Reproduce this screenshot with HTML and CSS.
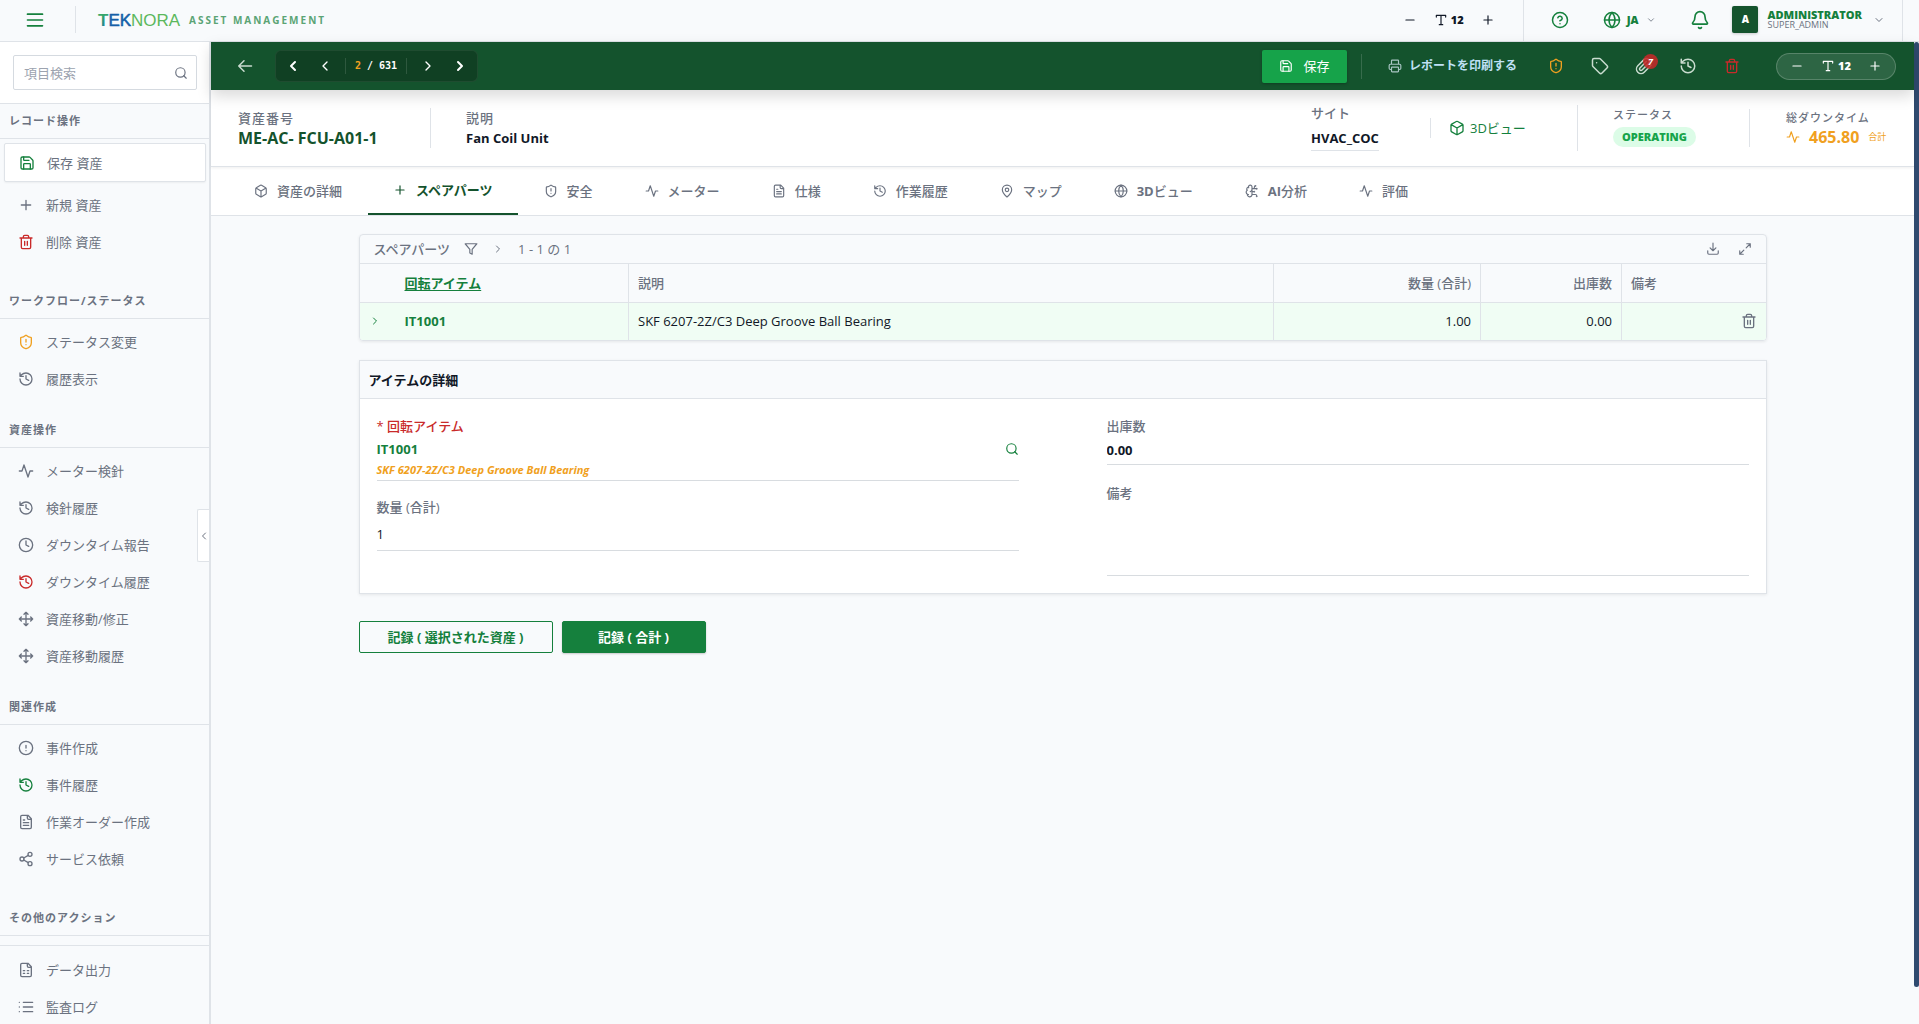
FILE: index.html
```html
<!DOCTYPE html>
<html lang="ja">
<head>
<meta charset="utf-8">
<meta name="viewport" content="width=device-width, initial-scale=1">
<title>TEKNORA Asset Management</title>
<link rel="stylesheet" href="styles.css">
</head>
<body>
<svg class="sprite" aria-hidden="true">
  <symbol id="menu" viewBox="0 0 24 24"><path d="M3 5h18M3 12h18M3 19h18"/></symbol>
  <symbol id="search" viewBox="0 0 24 24"><circle cx="11" cy="11" r="8"/><path d="m21 21-4.3-4.3"/></symbol>
  <symbol id="save" viewBox="0 0 24 24"><path d="M15.2 3a2 2 0 0 1 1.4.6l3.8 3.8a2 2 0 0 1 .6 1.4V19a2 2 0 0 1-2 2H5a2 2 0 0 1-2-2V5a2 2 0 0 1 2-2z"/><path d="M17 21v-7a1 1 0 0 0-1-1H8a1 1 0 0 0-1 1v7M7 3v4a1 1 0 0 0 1 1h7"/></symbol>
  <symbol id="plus" viewBox="0 0 24 24"><path d="M5 12h14M12 5v14"/></symbol>
  <symbol id="minus" viewBox="0 0 24 24"><path d="M5 12h14"/></symbol>
  <symbol id="type" viewBox="0 0 24 24"><path d="M4 7V4h16v3M9 20h6M12 4v16"/></symbol>
  <symbol id="trash" viewBox="0 0 24 24"><path d="M3 6h18M19 6v14a2 2 0 0 1-2 2H7a2 2 0 0 1-2-2V6M8 6V4a2 2 0 0 1 2-2h4a2 2 0 0 1 2 2v2M10 11v6M14 11v6"/></symbol>
  <symbol id="shield" viewBox="0 0 24 24"><path d="M20 13c0 5-3.5 7.5-7.66 8.95a1 1 0 0 1-.67-.01C7.5 20.5 4 18 4 13V6a1 1 0 0 1 1-1c2 0 4.5-1.2 6.24-2.72a1.17 1.17 0 0 1 1.52 0C14.51 3.81 17 5 19 5a1 1 0 0 1 1 1zM12 8v4M12 16h.01"/></symbol>
  <symbol id="history" viewBox="0 0 24 24"><path d="M3 12a9 9 0 1 0 9-9 9.75 9.75 0 0 0-6.74 2.74L3 8M3 3v5h5M12 7v5l4 2"/></symbol>
  <symbol id="activity" viewBox="0 0 24 24"><path d="M22 12h-4l-3 9L9 3l-3 9H2"/></symbol>
  <symbol id="clock" viewBox="0 0 24 24"><circle cx="12" cy="12" r="10"/><path d="M12 6v6l4 2"/></symbol>
  <symbol id="move" viewBox="0 0 24 24"><path d="M5 9l-3 3 3 3M9 5l3-3 3 3M15 19l-3 3-3-3M19 9l3 3-3 3M2 12h20M12 2v20"/></symbol>
  <symbol id="alert" viewBox="0 0 24 24"><circle cx="12" cy="12" r="10"/><path d="M12 8v4M12 16h.01"/></symbol>
  <symbol id="file" viewBox="0 0 24 24"><path d="M15 2H6a2 2 0 0 0-2 2v16a2 2 0 0 0 2 2h12a2 2 0 0 0 2-2V7zM14 2v4a2 2 0 0 0 2 2h4M10 9H8M16 13H8M16 17H8"/></symbol>
  <symbol id="sheet" viewBox="0 0 24 24"><path d="M15 2H6a2 2 0 0 0-2 2v16a2 2 0 0 0 2 2h12a2 2 0 0 0 2-2V7zM14 2v4a2 2 0 0 0 2 2h4M8 13h2M14 13h2M8 17h2M14 17h2"/></symbol>
  <symbol id="share" viewBox="0 0 24 24"><circle cx="18" cy="5" r="3"/><circle cx="6" cy="12" r="3"/><circle cx="18" cy="19" r="3"/><path d="m8.59 13.51 6.83 3.98M15.41 6.51l-6.82 3.98"/></symbol>
  <symbol id="list" viewBox="0 0 24 24"><path d="M8 5h14M8 12h14M8 19h14M2 5h.01M2 12h.01M2 19h.01"/></symbol>
  <symbol id="left" viewBox="0 0 24 24"><path d="m15 18-6-6 6-6"/></symbol>
  <symbol id="right" viewBox="0 0 24 24"><path d="m9 18 6-6-6-6"/></symbol>
  <symbol id="down" viewBox="0 0 24 24"><path d="m6 9 6 6 6-6"/></symbol>
  <symbol id="back" viewBox="0 0 24 24"><path d="m12 19-7-7 7-7M22 12H5"/></symbol>
  <symbol id="help" viewBox="0 0 24 24"><circle cx="12" cy="12" r="10"/><path d="M9.09 9a3 3 0 0 1 5.83 1c0 2-3 3-3 3M12 17h.01"/></symbol>
  <symbol id="globe" viewBox="0 0 24 24"><circle cx="12" cy="12" r="10"/><path d="M12 2a14.5 14.5 0 0 0 0 20 14.5 14.5 0 0 0 0-20M2 12h20"/></symbol>
  <symbol id="bell" viewBox="0 0 24 24"><path d="M10.27 21a2 2 0 0 0 3.46 0M3.26 15.33A1 1 0 0 0 4 17h16a1 1 0 0 0 .74-1.67C19.41 13.96 18 12.5 18 8A6 6 0 0 0 6 8c0 4.5-1.41 5.96-2.74 7.33"/></symbol>
  <symbol id="printer" viewBox="0 0 24 24"><path d="M6 18H4a2 2 0 0 1-2-2v-5a2 2 0 0 1 2-2h16a2 2 0 0 1 2 2v5a2 2 0 0 1-2 2h-2M6 9V3a1 1 0 0 1 1-1h10a1 1 0 0 1 1 1v6"/><rect x="6" y="14" width="12" height="8" rx="1"/></symbol>
  <symbol id="tag" viewBox="0 0 24 24"><path d="M12.59 2.59A2 2 0 0 0 11.17 2H4a2 2 0 0 0-2 2v7.17a2 2 0 0 0 .59 1.42l8.7 8.7a2.43 2.43 0 0 0 3.42 0l6.58-6.58a2.43 2.43 0 0 0 0-3.42zM7.5 7.5h.01"/></symbol>
  <symbol id="clip" viewBox="0 0 24 24"><path d="m21.44 11.05-9.19 9.19a6 6 0 0 1-8.49-8.49l8.57-8.57A4 4 0 1 1 18 8.84l-8.59 8.57a2 2 0 0 1-2.83-2.83l8.49-8.48"/></symbol>
  <symbol id="box" viewBox="0 0 24 24"><path d="M21 8a2 2 0 0 0-1-1.73l-7-4a2 2 0 0 0-2 0l-7 4A2 2 0 0 0 3 8v8a2 2 0 0 0 1 1.73l7 4a2 2 0 0 0 2 0l7-4A2 2 0 0 0 21 16ZM3.3 7l8.7 5 8.7-5M12 22V12"/></symbol>
  <symbol id="pin" viewBox="0 0 24 24"><path d="M20 10c0 4.99-5.54 10.19-7.4 11.8a1 1 0 0 1-1.2 0C9.54 20.19 4 14.99 4 10a8 8 0 0 1 16 0"/><circle cx="12" cy="10" r="3"/></symbol>
  <symbol id="brain" viewBox="0 0 24 24"><path d="M12 5a3 3 0 1 0-5.997.125 4 4 0 0 0-2.526 5.77 4 4 0 0 0 .556 6.588A4 4 0 1 0 12 18ZM9 13a4.5 4.5 0 0 0 3-4M6 5.13A3 3 0 0 0 6.4 6.5M3.48 10.9a4 4 0 0 1 .58-.4M6 18a4 4 0 0 1-1.97-.52M12 13h4M12 18h6a2 2 0 0 1 2 2v1M12 8h8M16 8V5a2 2 0 0 1 2-2"/><circle cx="16" cy="13" r=".5"/><circle cx="18" cy="3" r=".5"/><circle cx="20" cy="21" r=".5"/><circle cx="20" cy="8" r=".5"/></symbol>
  <symbol id="filter" viewBox="0 0 24 24"><path d="M22 3H2l8 9.46V19l4 2v-8.54z"/></symbol>
  <symbol id="download" viewBox="0 0 24 24"><path d="M21 15v4a2 2 0 0 1-2 2H5a2 2 0 0 1-2-2v-4M7 10l5 5 5-5M12 15V2"/></symbol>
  <symbol id="expand" viewBox="0 0 24 24"><path d="M15 3h6v6M21 3l-7 7M3 21l7-7M9 21H3v-6"/></symbol>
</svg>

<header class="topbar">
  <button class="icon-btn menu-btn" aria-label="メニュー"><svg class="i20"><use href="#menu"/></svg></button>
  <div class="brand">
    <svg class="logo" viewBox="0 0 84 24" role="img" aria-label="TEKNORA">
      <defs><linearGradient id="tfill" x1="0" y1="0" x2="1" y2="1"><stop offset="0" stop-color="#3fb45a"/><stop offset=".5" stop-color="#1f7f9f"/><stop offset="1" stop-color="#1560a8"/></linearGradient></defs>
      <text x="1" y="18"><tspan class="logo-t">T</tspan><tspan class="logo-blue">EK</tspan><tspan class="logo-green">NORA</tspan></text>
    </svg>
    <span class="brand-sub">ASSET MANAGEMENT</span>
  </div>
  <div class="top-zoom">
    <button class="icon-btn" aria-label="縮小"><svg class="i14"><use href="#minus"/></svg></button>
    <span class="zoom-value"><svg class="i14"><use href="#type"/></svg>12</span>
    <button class="icon-btn" aria-label="拡大"><svg class="i14"><use href="#plus"/></svg></button>
  </div>
  <div class="top-user">
    <button class="icon-btn" aria-label="ヘルプ"><svg class="i18"><use href="#help"/></svg></button>
    <button class="lang"><svg class="i18"><use href="#globe"/></svg><b>JA</b><svg class="i10"><use href="#down"/></svg></button>
    <button class="icon-btn" aria-label="通知"><svg class="i20"><use href="#bell"/></svg></button>
    <button class="user">
      <span class="avatar">A</span>
      <span class="user-text"><b>ADMINISTRATOR</b><span>SUPER_ADMIN</span></span>
      <svg class="i12"><use href="#down"/></svg>
    </button>
  </div>
</header>

<div class="shell">
  <aside class="sidebar">
    <div class="search">
      <input type="text" aria-label="項目検索" placeholder="項目検索">
      <svg class="i14"><use href="#search"/></svg>
    </div>
    <section class="group divided">
      <h2>レコード操作</h2>
      <a href="#" class="item current"><svg><use href="#save"/></svg>保存 資産</a>
      <a href="#" class="item"><svg><use href="#plus"/></svg>新規 資産</a>
      <a href="#" class="item red"><svg><use href="#trash"/></svg>削除 資産</a>
    </section>
    <section class="group">
      <h2>ワークフロー/ステータス</h2>
      <a href="#" class="item amber"><svg><use href="#shield"/></svg>ステータス変更</a>
      <a href="#" class="item"><svg><use href="#history"/></svg>履歴表示</a>
    </section>
    <section class="group">
      <h2>資産操作</h2>
      <a href="#" class="item"><svg><use href="#activity"/></svg>メーター検針</a>
      <a href="#" class="item"><svg><use href="#history"/></svg>検針履歴</a>
      <a href="#" class="item"><svg><use href="#clock"/></svg>ダウンタイム報告</a>
      <a href="#" class="item red"><svg><use href="#history"/></svg>ダウンタイム履歴</a>
      <a href="#" class="item"><svg><use href="#move"/></svg>資産移動/修正</a>
      <a href="#" class="item"><svg><use href="#move"/></svg>資産移動履歴</a>
    </section>
    <section class="group divided">
      <h2>関連作成</h2>
      <a href="#" class="item"><svg><use href="#alert"/></svg>事件作成</a>
      <a href="#" class="item green"><svg><use href="#history"/></svg>事件履歴</a>
      <a href="#" class="item"><svg><use href="#file"/></svg>作業オーダー作成</a>
      <a href="#" class="item"><svg><use href="#share"/></svg>サービス依頼</a>
    </section>
    <section class="group">
      <h2>その他のアクション</h2>
      <hr>
      <a href="#" class="item"><svg><use href="#sheet"/></svg>データ出力</a>
      <a href="#" class="item"><svg><use href="#list"/></svg>監査ログ</a>
    </section>
    <button class="collapse" aria-label="サイドバーを閉じる"><svg class="i12"><use href="#left"/></svg></button>
  </aside>

  <main class="main">
    <div class="toolbar">
      <button class="icon-btn back" aria-label="戻る"><svg class="i18"><use href="#back"/></svg></button>
      <div class="pager">
        <button class="strong" aria-label="最初"><svg class="i16"><use href="#left"/></svg></button>
        <button aria-label="前へ"><svg class="i16"><use href="#left"/></svg></button>
        <span class="count"><em>2</em> / 631</span>
        <button aria-label="次へ"><svg class="i16"><use href="#right"/></svg></button>
        <button class="strong" aria-label="最後"><svg class="i16"><use href="#right"/></svg></button>
      </div>
      <button class="save"><svg class="i14"><use href="#save"/></svg>保存</button>
      <button class="print"><svg class="i14"><use href="#printer"/></svg>レポートを印刷する</button>
      <div class="tools">
        <button class="amber" aria-label="ステータス変更"><svg class="i16"><use href="#shield"/></svg></button>
        <button aria-label="タグ"><svg class="i18"><use href="#tag"/></svg></button>
        <button class="attach" aria-label="添付"><svg class="i18"><use href="#clip"/></svg><span class="badge">7</span></button>
        <button aria-label="履歴"><svg class="i18"><use href="#history"/></svg></button>
        <button class="red" aria-label="削除"><svg class="i16"><use href="#trash"/></svg></button>
      </div>
      <div class="pill">
        <button class="icon-btn" aria-label="縮小"><svg class="i14"><use href="#minus"/></svg></button>
        <span class="zoom-value"><svg class="i14"><use href="#type"/></svg>12</span>
        <button class="icon-btn" aria-label="拡大"><svg class="i14"><use href="#plus"/></svg></button>
      </div>
    </div>

    <div class="summary">
      <div class="fact asset"><span class="cap">資産番号</span><b>ME-AC- FCU-A01-1</b></div>
      <div class="fact desc"><span class="cap">説明</span><b>Fan Coil Unit</b></div>
      <div class="fact site"><span class="cap tight">サイト</span><b>HVAC_COC</b></div>
      <a href="#" class="view3d"><svg class="i16"><use href="#box"/></svg>3Dビュー</a>
      <div class="fact status"><span class="cap small">ステータス</span><b>OPERATING</b></div>
      <div class="fact downtime"><span class="cap small">総ダウンタイム</span><span class="total"><svg class="i14"><use href="#activity"/></svg><b>465.80</b><small>合計</small></span></div>
    </div>

    <nav class="tabs">
      <a href="#"><svg class="i14"><use href="#box"/></svg>資産の詳細</a>
      <a href="#" class="active" aria-current="page"><svg class="i14"><use href="#plus"/></svg>スペアパーツ</a>
      <a href="#"><svg class="i14"><use href="#shield"/></svg>安全</a>
      <a href="#"><svg class="i14"><use href="#activity"/></svg>メーター</a>
      <a href="#"><svg class="i14"><use href="#file"/></svg>仕様</a>
      <a href="#"><svg class="i14"><use href="#history"/></svg>作業履歴</a>
      <a href="#"><svg class="i14"><use href="#pin"/></svg>マップ</a>
      <a href="#"><svg class="i14"><use href="#globe"/></svg><span><b>3D</b>ビュー</span></a>
      <a href="#"><svg class="i14"><use href="#brain"/></svg><span><b>AI</b>分析</span></a>
      <a href="#"><svg class="i14"><use href="#activity"/></svg>評価</a>
    </nav>

    <div class="content">
      <section class="card parts">
        <div class="parts-bar">
          <h3>スペアパーツ</h3>
          <button class="icon-btn" aria-label="フィルター"><svg class="i14"><use href="#filter"/></svg></button>
          <button class="icon-btn" aria-label="展開"><svg class="i12"><use href="#right"/></svg></button>
          <span class="range">1 - 1 の 1</span>
          <button class="icon-btn push" aria-label="ダウンロード"><svg class="i14"><use href="#download"/></svg></button>
          <button class="icon-btn" aria-label="全画面"><svg class="i14"><use href="#expand"/></svg></button>
        </div>
        <table>
          <colgroup><col class="c-open"><col class="c-item"><col><col class="c-qty"><col class="c-out"><col class="c-note"></colgroup>
          <thead>
            <tr><th></th><th class="sorted"><a href="#">回転アイテム</a></th><th>説明</th><th class="num">数量 (合計)</th><th class="num">出庫数</th><th>備考</th></tr>
          </thead>
          <tbody>
            <tr><td><button class="icon-btn open" aria-label="開く"><svg class="i12"><use href="#right"/></svg></button></td><td class="code">IT1001</td><td>SKF 6207-2Z/C3 Deep Groove Ball Bearing</td><td class="num">1.00</td><td class="num">0.00</td><td class="num"><button class="icon-btn del" aria-label="行を削除"><svg class="i16"><use href="#trash"/></svg></button></td></tr>
          </tbody>
        </table>
      </section>

      <section class="card detail">
        <h3>アイテムの詳細</h3>
        <form class="fields">
          <div class="col">
            <div class="field item-field">
              <label for="item" class="required">* 回転アイテム</label>
              <div class="lookup"><input id="item" type="text" value="IT1001"><button type="button" class="icon-btn" aria-label="検索"><svg class="i14"><use href="#search"/></svg></button></div>
              <span class="hint">SKF 6207-2Z/C3 Deep Groove Ball Bearing</span>
            </div>
            <div class="field"><label for="qty">数量 (合計)</label><input id="qty" class="qty" type="text" value="1"></div>
          </div>
          <div class="col">
            <div class="field"><label for="out">出庫数</label><input id="out" class="out" type="text" value="0.00"></div>
            <div class="field"><label for="note">備考</label><textarea id="note"></textarea></div>
          </div>
        </form>
      </section>

      <div class="actions">
        <button class="outline">記録 ( 選択された資産 )</button>
        <button class="solid">記録 ( 合計 )</button>
      </div>
    </div>
  </main>
  <div class="scroll" aria-hidden="true"><div class="thumb"></div></div>
</div>
</body>
</html>
```
FILE: styles.css
```css
:root {
  --line: #dfe3e8;
  --bg: #f8fafc;
  --gray: #6b7280;
  --ink: #111827;
  --green: #15803d;
  --deep: #14532d;
  --amber: #f0a020;
  --red: #c92a2a;
}
* { box-sizing: border-box; }
body {
  margin: 0;
  height: 100vh;
  display: flex;
  flex-direction: column;
  overflow: hidden;
  background: var(--bg);
  color: var(--ink);
  font: 13px/20px "Open Sans", "Noto Sans CJK JP", sans-serif;
}
button, input, textarea { font: inherit; color: inherit; }
button { border: 0; padding: 0; background: none; display: flex; align-items: center; justify-content: center; white-space: nowrap; cursor: pointer; }
a { color: inherit; text-decoration: none; }
h2, h3 { margin: 0; font-size: 13px; }
svg { fill: none; stroke: currentColor; stroke-width: 2; stroke-linecap: round; stroke-linejoin: round; flex: none; }
.sprite { position: absolute; width: 0; height: 0; }
.i10 { width: 10px; height: 10px; }
.i12 { width: 12px; height: 12px; }
.i14 { width: 14px; height: 14px; }
.i16 { width: 16px; height: 16px; }
.i18 { width: 18px; height: 18px; }
.i20 { width: 20px; height: 20px; }

/* Top bar */
.topbar { flex: none; height: 42px; display: flex; align-items: center; border-bottom: 1px solid var(--line); padding: 0 16px 2px 0; }
.menu-btn { width: 76px; height: 27px; padding-right: 6px; border-right: 1px solid var(--line); color: var(--green); }
.brand { display: flex; align-items: center; gap: 8px; padding-left: 21px; margin-right: auto; }
.logo { width: 84px; height: 24px; stroke: none; font: 17px "Liberation Sans", sans-serif; }
.logo-t { fill: url(#tfill); font-weight: 700; }
.logo-blue { fill: #1560a8; stroke: #1560a8; stroke-width: .5px; }
.logo-green { fill: #5cb85c; }
.brand-sub { font-size: 10px; font-weight: 700; letter-spacing: 2px; color: #5ba475; }
.top-zoom { display: flex; align-items: center; gap: 17px; padding-right: 28px; }
.zoom-value { display: flex; align-items: center; gap: 3px; font-size: 11px; font-weight: 800; }
.top-user { display: flex; align-items: center; height: 41px; margin-bottom: -2px; padding: 0 17px 2px 27px; border: solid var(--line); border-width: 0 1px; color: var(--green); }
.lang { gap: 6px; margin: 0 34px; font-size: 11px; }
.lang .i10, .user > svg { color: var(--gray); }
.lang b { font-weight: 800; margin-right: 2px; }
.user { gap: 9px; margin-left: 22px; }
.user > svg { margin-left: 2px; }
.avatar { width: 26px; height: 27px; border-radius: 2px; background: var(--deep); color: #fff; font-size: 10px; font-weight: 800; line-height: 27px; box-shadow: 0 1px 3px #0003; }
.user-text { display: flex; flex-direction: column; text-align: left; font-size: 11px; line-height: 10px; }
.user-text b { font-weight: 800; }
.user-text span { font-size: 9px; color: var(--gray); }

.shell { flex: 1; min-height: 0; display: flex; }

/* Sidebar */
.sidebar { position: relative; flex: none; width: 211px; border-right: 2px solid var(--line); overflow: hidden; color: var(--gray); }
.search { position: relative; padding: 13px; background: #fff; border-bottom: 1px solid var(--line); }
.search input { display: block; width: 184px; height: 35px; padding: 0 10px; border: 1px solid #d5dae0; border-radius: 2px; background: #fff; outline: 0; }
.search input::placeholder { color: #9ca3af; opacity: 1; }
.search svg { position: absolute; right: 21px; top: 24px; }
.group { padding-bottom: 16px; }
.group.divided { padding-bottom: 24px; }
.group h2 { height: 35px; margin-bottom: 4px; padding: 0 9px; border-bottom: 1px solid var(--line); font-size: 11px; line-height: 34px; letter-spacing: 1px; }
.group hr { margin: 0 0 5px; border: 0; border-bottom: 1px solid var(--line); padding-top: 5px; }
.item { display: flex; align-items: center; gap: 12px; height: 37px; padding-left: 18px; }
.item svg { width: 16px; height: 16px; }
.item.current { height: 39px; margin: 0 3px 4px 4px; padding-left: 14px; background: #fff; border: 1px solid var(--line); border-radius: 2px; box-shadow: 0 1px 2px #0000000d; }
.current svg, .green svg { color: var(--green); }
.red svg { color: var(--red); }
.amber svg { color: var(--amber); }
.collapse { position: absolute; right: 0; top: 467px; width: 12px; height: 53px; background: #fff; border: 1px solid var(--line); border-right: 0; border-radius: 2px 0 0 2px; }

/* Record toolbar */
.main { flex: 1; min-width: 0; display: flex; flex-direction: column; }
.toolbar { position: relative; z-index: 2; flex: none; display: flex; align-items: center; height: 48px; padding: 0 18px 0 24px; background: var(--deep); color: #c9dccf; box-shadow: 0 6px 14px #00000026; }
.pager { display: flex; align-items: center; height: 32px; margin: 0 auto 0 22px; padding: 0 1px; border: 1px solid #ffffff10; border-radius: 6px; background: #104023; color: #fff; }
.pager button { width: 32px; height: 28px; }
.pager .strong svg { stroke-width: 3; }
.count { width: 62px; height: 16px; margin: 0 5px 0 4px; border: solid #ffffff20; border-width: 0 1px; font: bold 10px/15px "DejaVu Sans Mono", monospace; text-align: center; }
.count em { font-style: normal; color: var(--amber); }
.save { width: 85px; height: 33px; gap: 10px; border-radius: 2px; background: #16a34a; color: #fff; box-shadow: 0 1px 3px #0004; }
.print { gap: 7px; margin-left: 14px; padding-left: 26px; height: 25px; border-left: 1px solid #ffffff26; font-size: 12px; font-weight: 700; color: #bfe0f5; }
.print svg { color: #a9c5c3; }
.tools { display: flex; margin: 0 22px 0 17px; }
.tools button { width: 44px; height: 32px; }
.attach { position: relative; }
.badge { position: absolute; left: 21px; top: 4px; width: 15px; height: 15px; border-radius: 8px; background: #c62828dd; color: #fff; font-size: 9px; font-weight: 700; font-style: italic; line-height: 15px; }
.pill { display: flex; align-items: center; justify-content: center; gap: 17px; width: 120px; height: 27px; border: 1px solid #ffffff33; border-radius: 14px; background: #ffffff1c; color: #fff; }

/* Summary strip */
.summary { position: relative; z-index: 1; flex: none; display: flex; align-items: center; height: 77px; padding: 0 27px; background: #fff; border-bottom: 1px solid var(--line); box-shadow: 0 1px 3px #0001; }
.fact { display: flex; flex-direction: column; }
.cap { color: var(--gray); font-weight: 500; letter-spacing: 1px; }
.cap.tight { letter-spacing: 0; }
.cap.small { font-size: 11px; }
.asset { width: 193px; border-right: 1px solid var(--line); }
.asset b { font-size: 16px; font-weight: 700; color: var(--deep); }
.desc { margin: 0 auto 0 35px; }
.site { width: 119px; height: 50px; gap: 3px; align-items: flex-start; }
.site b { border-bottom: 1px solid var(--line); line-height: 24px; }
.view3d { display: flex; align-items: center; gap: 5px; width: 147px; padding-left: 18px; border-left: 1px solid var(--line); color: var(--green); }
.status { width: 172px; padding: 0 0 4px 35px; gap: 2px; align-items: flex-start; border-left: 1px solid var(--line); }
.status b { padding: 0 9px; border-radius: 10px; background: #dcfce7; color: #16a34a; font-size: 11px; font-weight: 800; }
.downtime { width: 138px; padding-left: 36px; border-left: 1px solid var(--line); }
.downtime .cap { line-height: 18px; }
.total { display: flex; align-items: center; gap: 9px; color: var(--amber); }
.total b { font-size: 16px; font-weight: 700; }
.total small { font-size: 9px; }

/* Tabs */
.tabs { flex: none; display: flex; height: 49px; padding-left: 17px; background: #fff; border-bottom: 1px solid var(--line); color: var(--gray); font-weight: 500; }
.tabs a { display: flex; align-items: center; gap: 9px; padding: 0 26px; }
.tabs b { font-weight: 700; }
.tabs .active { padding: 0 25px; color: var(--deep); font-weight: 700; border-bottom: 2px solid var(--deep); }

/* Page content */
.content { width: 100%; max-width: 1408px; margin: 0 auto; padding: 18px 0; }
.card { border: 1px solid var(--line); box-shadow: 0 1px 3px #00000014; }
.parts { border-radius: 4px; overflow: hidden; margin-bottom: 19px; }
.parts-bar { display: flex; align-items: center; gap: 14px; height: 29px; padding: 0 14px; border-bottom: 1px solid var(--line); color: var(--gray); }
.parts-bar h3 { font-weight: 500; }
.range { font-size: 13px; }
.push { margin: 0 4px 0 auto; }
table { width: 100%; border-collapse: collapse; table-layout: fixed; }
.c-open { width: 36px; }
.c-item { width: 233px; }
.c-qty { width: 207px; }
.c-out { width: 141px; }
.c-note { width: 144px; }
th, td { height: 38px; padding: 0 9px; text-align: left; }
td { background: #f0fdf4; }
th { border-bottom: 1px solid var(--line); color: var(--gray); font-weight: 500; }
th + th ~ th, td + td ~ td { border-left: 1px solid var(--line); }
.num { text-align: right; }
.sorted a { color: var(--green); font-weight: 700; text-decoration: underline; text-underline-offset: 2px; }
.code { color: var(--green); font-weight: 700; }
.open { color: var(--green); }
.del { margin-left: auto; color: var(--gray); }
.detail { background: #fff; margin-bottom: 27px; }
.detail h3 { height: 38px; padding-left: 9px; line-height: 38px; background: var(--bg); border-bottom: 1px solid var(--line); }
.fields { display: grid; grid-template-columns: 1fr 1fr; gap: 88px; padding: 17px; }
.field { display: flex; flex-direction: column; border-bottom: 1px solid #d8dce0; margin-bottom: 18px; }
.item-field { margin-bottom: 16px; }
.col .field:last-child { margin-bottom: 0; }
.field label { color: var(--gray); font-weight: 500; }
.field .required { color: var(--red); }
.field input, .field textarea { width: 100%; padding: 0; border: 0; background: none; outline: 0; resize: none; }
.lookup { display: flex; align-items: center; height: 26px; color: var(--green); font-weight: 700; }
.hint { font-size: 11px; line-height: 16px; padding-bottom: 2px; font-weight: 700; font-style: italic; color: var(--amber); }
.field .qty { height: 33px; }
.out { height: 28px; font-weight: 700; }
.field textarea { height: 72px; }
.actions { display: flex; gap: 9px; }
.actions button { height: 32px; border: 1px solid var(--green); border-radius: 2px; font-weight: 700; color: var(--green); }
.actions .outline { width: 194px; }
.actions .solid { width: 144px; background: var(--green); color: #fff; box-shadow: 0 1px 2px #0003; }

.scroll { flex: none; width: 5px; padding-bottom: 37px; }
.thumb { height: 100%; border-radius: 3px; background: #2f4a6f; }
```
